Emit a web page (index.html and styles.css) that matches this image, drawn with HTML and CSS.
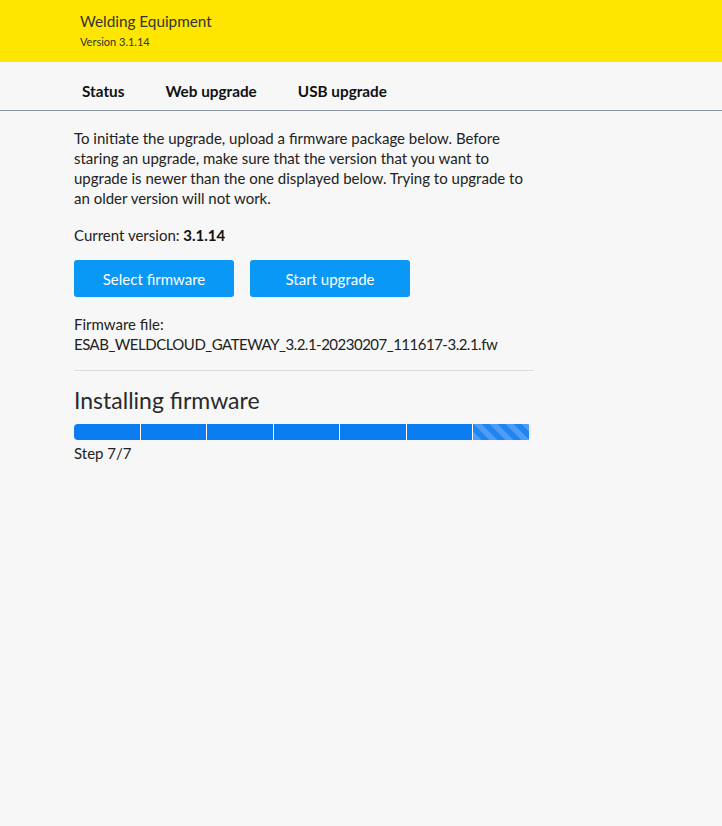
FILE: index.html
```html
<!DOCTYPE html>
<html>
<head>
<meta charset="utf-8">
<link rel="stylesheet" href="styles.css">
</head>
<body>
<header class="top">
  <div class="brand">
    <div class="title">Welding Equipment</div>
    <div class="version">Version 3.1.14</div>
  </div>
</header>
<nav class="tabs">
  <a class="tab">Status</a>
  <a class="tab">Web upgrade</a>
  <a class="tab">USB upgrade</a>
</nav>
<main class="content">
  <p class="intro">To initiate the upgrade, upload a firmware package below. Before staring an upgrade, make sure that the version that you want to upgrade is newer than the one displayed below. Trying to upgrade to an older version will not work.</p>
  <p class="current">Current version: <b>3.1.14</b></p>
  <div class="buttons">
    <button class="btn">Select firmware</button>
    <button class="btn">Start upgrade</button>
  </div>
  <p class="file">Firmware file:<br><span class="fname">ESAB_WELDCLOUD_GATEWAY_3.2.1-20230207_111617-3.2.1.fw</span></p>
  <hr class="rule">
  <h2 class="install">Installing firmware</h2>
  <div class="progress">
    <div class="seg"></div>
    <div class="seg"></div>
    <div class="seg"></div>
    <div class="seg"></div>
    <div class="seg"></div>
    <div class="seg"></div>
    <div class="seg striped"></div>
  </div>
  <div class="step">Step 7/7</div>
</main>
</body>
</html>
```
FILE: styles.css
```css
html, body {
  margin: 0;
  padding: 0;
  background: #f7f7f7;
  font-family: Lato, "Open Sans", sans-serif;
  color: #222;
}
.top {
  background: #ffe600;
  height: 62px;
  box-sizing: border-box;
  padding: 11px 0 0 80px;
}
.title {
  font-size: 15.3px;
  line-height: 20px;
  color: #333;
}
.version {
  font-size: 11px;
  line-height: 14px;
  margin-top: 4px;
  color: #333;
}
.tabs {
  display: flex;
  height: 49px;
  box-sizing: border-box;
  border-bottom: 1px solid #8c97a6;
  padding-left: 82px;
  align-items: center;
  gap: 41px;
}
.tab {
  font-weight: bold;
  font-size: 15.3px;
  color: #111;
  padding-top: 10px;
}
.content {
  width: 460px;
  margin-left: 74px;
  padding-top: 17px;
  font-size: 15px;
  line-height: 20px;
}
.content p {
  margin: 0;
}
.intro {
  margin-bottom: 17px !important;
}
.current b {
  font-weight: bold;
  color: #111;
}
.buttons {
  display: flex;
  gap: 16px;
  margin-top: 15px;
}
.btn {
  width: 160px;
  height: 37px;
  border: none;
  border-radius: 3px;
  background: #0a98f7;
  color: #fff;
  font-family: inherit;
  font-size: 15px;
  padding: 0;
}
.file {
  margin-top: 17px !important;
}
.fname {
  letter-spacing: -0.5px;
}
.rule {
  border: none;
  border-top: 1px solid #ddd;
  margin: 16px 0 0;
}
.install {
  font-weight: normal;
  font-size: 23px;
  line-height: 30px;
  margin: 14px 0 9px;
  color: #2a2a2a;
}
.progress {
  display: flex;
  width: 457px;
  height: 16px;
  border-radius: 4px;
  overflow: hidden;
  background: #eceef1;
}
.seg {
  flex: 0 0 66.5px;
  box-sizing: border-box;
  background: #0a7df2;
  border-right: 1px solid #fff;
}
.seg.striped {
  flex: 0 0 56px;
  border-right: none;
  background-color: #1f85f0;
  background-image: linear-gradient(45deg, rgba(255,255,255,.2) 25%, transparent 25%, transparent 50%, rgba(255,255,255,.2) 50%, rgba(255,255,255,.2) 75%, transparent 75%, transparent);
  background-size: 16px 16px;
}
.step {
  margin-top: 3px;
  font-size: 15px;
}
```
